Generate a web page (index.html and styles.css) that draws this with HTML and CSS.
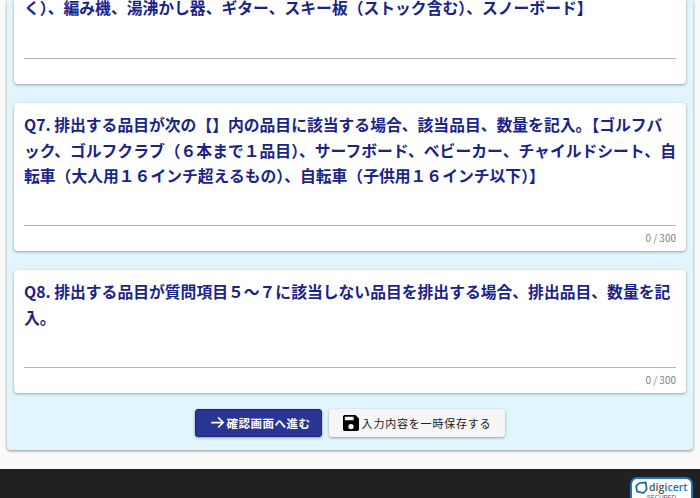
FILE: index.html
```html
<!DOCTYPE html>
<html lang="ja">
<head>
<meta charset="utf-8">
<title>アンケート</title>
<link rel="stylesheet" href="styles.css">
</head>
<body>
<main class="panel">
  <section class="card card-first">
    <p class="question question-clip">く）、編み機、湯沸かし器、ギター、スキー板（ストック含む）、スノーボード】</p>
    <div class="field field-first"></div>
  </section>
  <section class="card">
    <p class="question">Q7. 排出する品目が次の【】内の品目に該当する場合、該当品目、数量を記入。【ゴルフバック、ゴルフクラブ（６本まで１品目）、サーフボード、ベビーカー、チャイルドシート、自転車（大人用１６インチ超えるもの）、自転車（子供用１６インチ以下）】</p>
    <div class="field"></div>
    <div class="count">0 / 300</div>
  </section>
  <section class="card">
    <p class="question">Q8. 排出する品目が質問項目５～７に該当しない品目を排出する場合、排出品目、数量を記入。</p>
    <div class="field"></div>
    <div class="count">0 / 300</div>
  </section>
  <div class="actions">
    <button class="btn btn-primary" type="button">
      <svg class="icon-arrow" viewBox="0 0 24 24" aria-hidden="true"><path d="M2 12h19M13 4l8 8-8 8" fill="none" stroke="#fff" stroke-width="2.8"/></svg>
      確認画面へ進む
    </button>
    <button class="btn btn-secondary" type="button">
      <svg class="icon-save" viewBox="3 3 18 18" aria-hidden="true"><path d="M17 3H5a2 2 0 0 0-2 2v14a2 2 0 0 0 2 2h14a2 2 0 0 0 2-2V7l-4-4zm-5 16a3 3 0 1 1 0-6 3 3 0 0 1 0 6zm3-10H5V5h10v4z"/></svg>
      入力内容を一時保存する
    </button>
  </div>
</main>
<footer class="footer">
  <div class="seal">
    <div class="seal-row">
      <svg class="seal-logo" viewBox="0 0 20 20" aria-hidden="true"><path d="M6 3.5 16.5 2 18 13l-5 5.5L3 16 1.8 8z" fill="none" stroke="#1b5f9e" stroke-width="2.6" stroke-linejoin="round"/></svg>
      <span class="seal-name">digi<b>cert</b></span>
    </div>
    <div class="seal-sub">SECURED</div>
  </div>
</footer>
</body>
</html>
```
FILE: styles.css
```css
* { box-sizing: border-box; }
html, body { margin: 0; padding: 0; }
body {
  width: 700px;
  height: 498px;
  overflow: hidden;
  background: #fafafa;
  font-family: "Noto Sans CJK JP", "Noto Sans", sans-serif;
}
.panel {
  margin: 0 7px;
  height: 450px;
  padding: 0 7px;
  background: #e1f5fe;
  border-radius: 0 0 4px 4px;
  box-shadow: 0 1px 3px rgba(0, 0, 0, .45);
  display: flex;
  flex-direction: column;
}
.card {
  background: #fff;
  border-radius: 4px;
  box-shadow: 0 1px 3px rgba(0, 0, 0, .35);
  padding: 9px 10px 0;
  margin-bottom: 19px;
  display: flex;
  flex-direction: column;
}
.card-first {
  height: 84px;
  padding-top: 0;
  border-radius: 0 0 4px 4px;
}
.question {
  margin: 0;
  font-size: 15.8px;
  font-weight: 700;
  line-height: 25.6px;
  color: #1a2389;
}
.question-clip { line-height: 15px; }
.field {
  margin-top: 36.4px;
  height: 1px;
  background: #b4b4b4;
}
.field-first { margin-top: auto; margin-bottom: 25px; }
.count {
  height: 25px;
  padding-top: 4px;
  text-align: right;
  font-size: 10px;
  line-height: 16px;
  color: #808080;
}
.actions {
  margin-top: -3px;
  display: flex;
  justify-content: center;
  gap: 7px;
}
.btn {
  height: 28px;
  border: 0;
  border-radius: 3px;
  display: flex;
  align-items: center;
  justify-content: center;
  padding: 0;
  font-family: inherit;
  box-shadow: 0 1px 3px rgba(0, 0, 0, .35);
}
.btn-primary {
  width: 127px;
  background: #283593;
  border: 1px solid #1a237e;
  color: #fff;
  font-size: 11.5px;
  font-weight: 700;
  letter-spacing: .5px;
  gap: 2px;
  padding-left: 3px;
}
.btn-secondary {
  width: 176px;
  background: #f5f5f5;
  color: #212121;
  font-size: 11px;
  letter-spacing: .8px;
  gap: 3px;
}
.icon-arrow { width: 15px; height: 15px; }
.icon-save { width: 16px; height: 16px; fill: #000; }
.footer {
  margin-top: 19px;
  height: 29px;
  background: #212121;
  display: flex;
  justify-content: flex-end;
  padding-right: 7px;
  padding-top: 8px;
}
.seal {
  width: 63px;
  height: 40px;
  background: #fff;
  border: 2px solid #1b75bc;
  border-radius: 7px;
  padding: 1px 3px;
}
.seal-row { display: flex; align-items: center; gap: 1px; height: 14px; }
.seal-logo { width: 13px; height: 13px; flex: none; }
.seal-name {
  font-family: "Open Sans", sans-serif;
  font-size: 10.6px;
  font-weight: 600;
  line-height: 14px;
  color: #555;
}
.seal-name b { color: #1b75bc; font-weight: 600; }
.seal-sub {
  text-align: center;
  font-family: "Liberation Sans", sans-serif;
  font-size: 6px;
  line-height: 7px;
  color: #555;
}
```
